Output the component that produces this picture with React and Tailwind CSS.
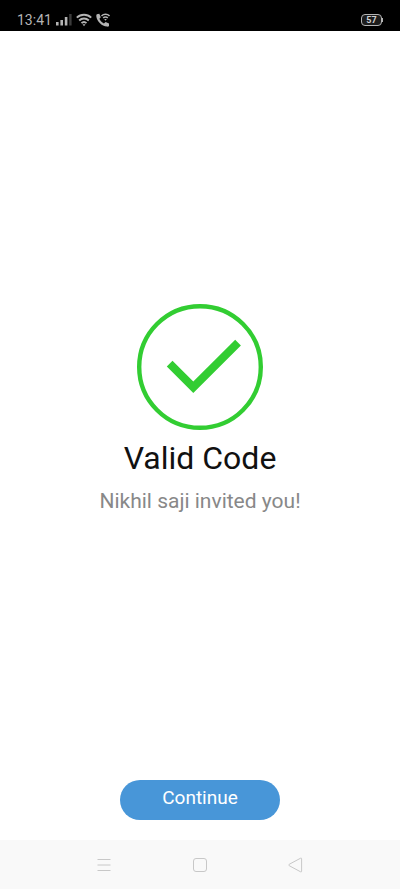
import React from 'react';

const StatusBar = () => (
    <header className="flex items-center justify-between h-[31px] shrink-0 bg-black px-[17px] pt-2 text-[#b4b4b4]">
        <div className="flex items-center">
            <span className="text-sm leading-5">13:41</span>
            <svg width="16" height="14" viewBox="0 0 16 14" className="ml-1" aria-hidden="true">
                <rect x="0" y="9" width="2.6" height="3.5" fill="currentColor" />
                <rect x="4.4" y="7" width="2.6" height="5.5" fill="currentColor" />
                <rect x="8.8" y="4" width="2.6" height="8.5" fill="currentColor" />
                <rect x="13.2" y="1" width="2.4" height="11.5" fill="#3c3c3c" />
            </svg>
            <svg width="16" height="14" viewBox="0 0 16 14" className="ml-1" fill="none" stroke="currentColor" strokeWidth="1.9" aria-hidden="true">
                <path d="M0.8 4.7a10.2 10.2 0 0 1 14.4 0" />
                <path d="M3.2 7.5a6.8 6.8 0 0 1 9.6 0" />
                <path d="M5.5 10.1a3.6 3.6 0 0 1 5 0" />
                <path d="M6.5 11.3h3L8 13.2z" fill="currentColor" stroke="none" />
            </svg>
            <svg width="14" height="14" viewBox="0 0 14 14" className="ml-1" aria-hidden="true">
                <path
                    d="M.8 1.2 3.3.8 4.8 4.2 3.4 5.8c.9 2.1 2.4 3.6 4.5 4.6L9.6 9l3.4 1.5v2.6c-.5.5-1 .6-1.9.5C5.5 13 .7 8.2.3 2.9c0-.8.1-1.3.5-1.7z"
                    fill="currentColor"
                />
                <path d="M5.5 2.9a5.6 5.6 0 0 1 8 0M7.2 5a3.2 3.2 0 0 1 4.6 0" fill="none" stroke="currentColor" strokeWidth="1.5" />
                <path d="M8.2 6h2.6L9.5 7.7z" fill="currentColor" />
            </svg>
        </div>
        <div className="flex items-center">
            <span className="flex items-center justify-center w-[21px] h-3 rounded border border-[#b4b4b4] bg-[#1c1c1c] text-[9px] leading-3 font-bold text-[#d0d0d0]">
                57
            </span>
            <span className="w-px h-1 bg-[#b4b4b4]" />
        </div>
    </header>
);

const SuccessIcon = () => (
    <svg width="126" height="126" viewBox="0 0 126 126" role="img" aria-label="Success">
        <circle cx="63" cy="63" r="60.8" fill="none" stroke="#32cd32" strokeWidth="4.4" />
        <path d="M29.8 62.5 35.5 56.8 56.3 77.6 98.2 35.7l5.7 5.7L56.3 89z" fill="#32cd32" />
    </svg>
);

const NavigationBar = () => (
    <nav className="flex items-center justify-center gap-20 h-[49px] shrink-0 bg-[#f9f9f9] text-[#c8c8c8]">
        <button type="button" aria-label="Recent apps">
            <svg width="16" height="16" viewBox="0 0 16 16" fill="none" stroke="currentColor">
                <path d="M1.5 2.5h13M1.5 8h13M1.5 13.5h13" />
            </svg>
        </button>
        <button type="button" aria-label="Home">
            <svg width="16" height="16" viewBox="0 0 16 16" fill="none" stroke="currentColor">
                <rect x="1.5" y="1.5" width="13" height="13" rx="2.5" />
            </svg>
        </button>
        <button type="button" aria-label="Back">
            <svg width="16" height="16" viewBox="0 0 16 16" fill="none" stroke="currentColor" strokeLinejoin="round">
                <path d="M1.2 7.3 12.6 1.2q1-.4 1 .6v12.4q0 1-1 .6L1.2 8.7q-1-.7 0-1.4z" />
            </svg>
        </button>
    </nav>
);

const App = () => {
    return (
        <div className="flex flex-col min-h-screen bg-white font-['Roboto',sans-serif]">
            <StatusBar />

            <main className="flex flex-col flex-1 items-center pb-5">
                <div className="flex flex-col flex-1 items-center justify-center pt-1.5 text-center">
                    <SuccessIcon />
                    <h1 className="mt-2 text-[32px] leading-10 text-[#111111]">Valid Code</h1>
                    <p className="mt-2 pt-0.5 text-[21px] leading-[26px] text-[#888888]">Nikhil saji invited you!</p>
                </div>

                {/* Label sits slightly above the middle of the pill */}
                <button
                    type="button"
                    className="w-40 h-10 pb-1 rounded-full bg-[#4896d8] text-[19px] leading-7 text-white"
                >
                    Continue
                </button>
            </main>

            <NavigationBar />
        </div>
    );
};

export default App;
